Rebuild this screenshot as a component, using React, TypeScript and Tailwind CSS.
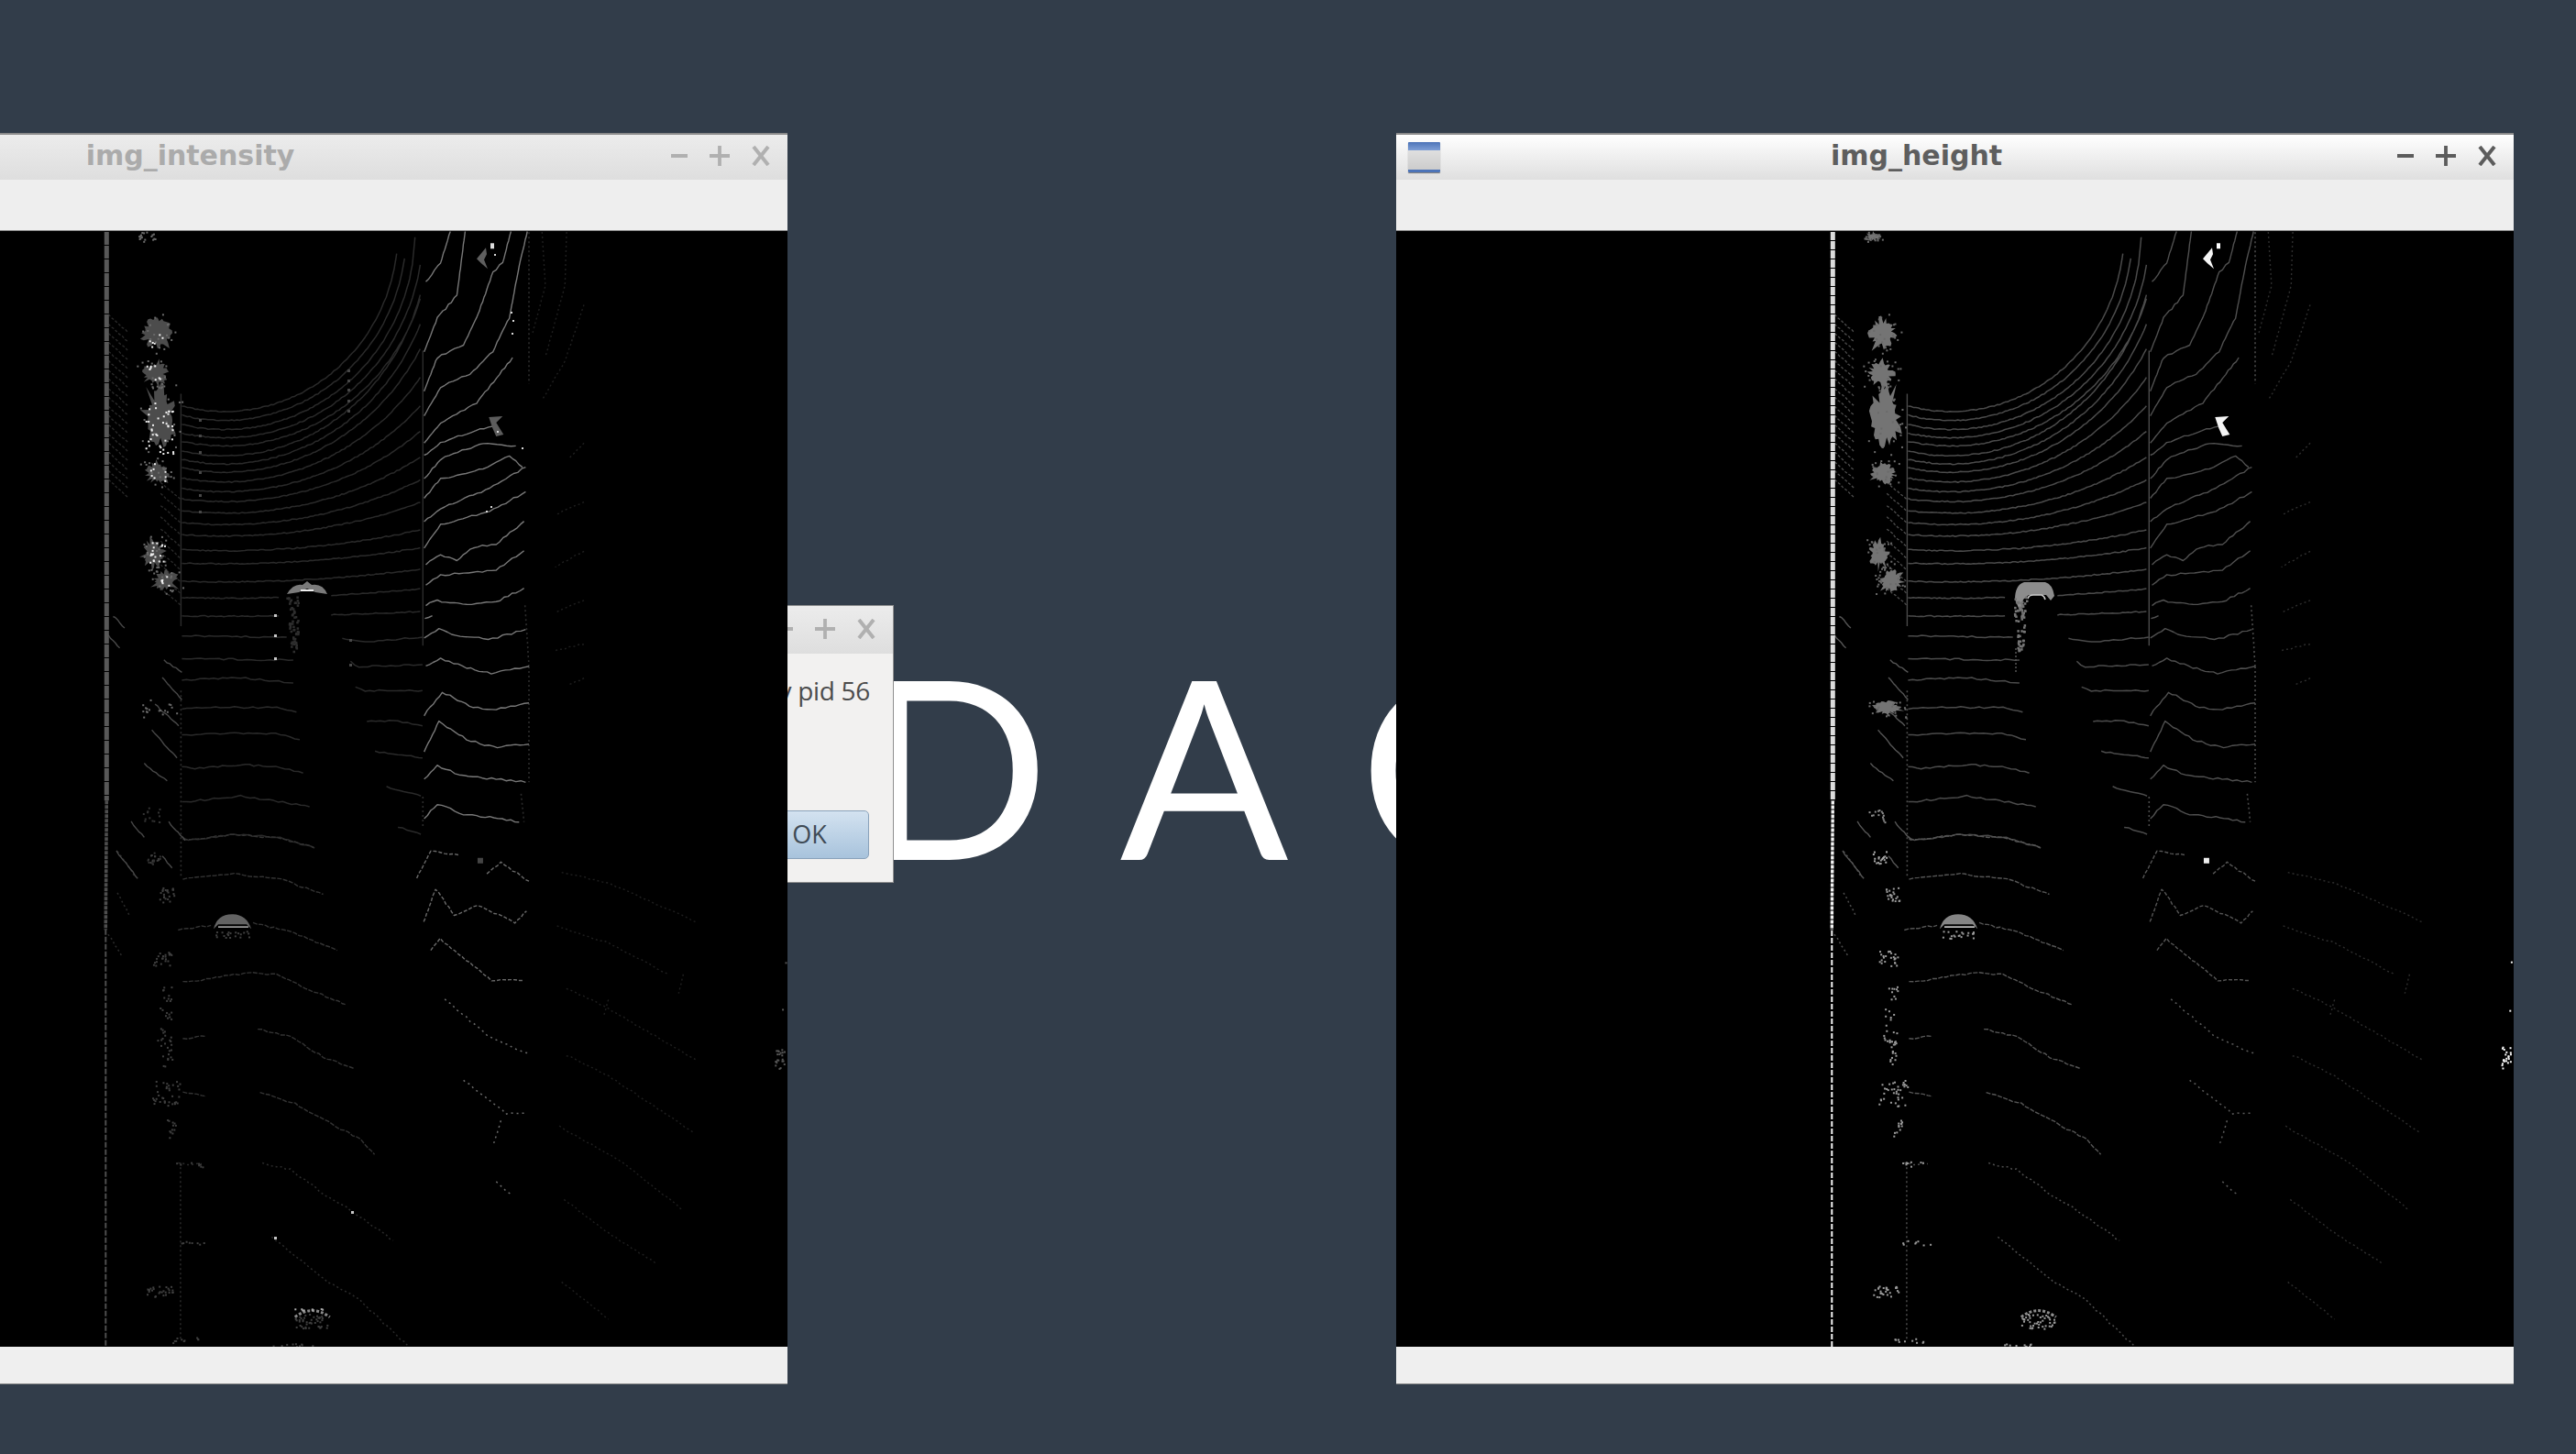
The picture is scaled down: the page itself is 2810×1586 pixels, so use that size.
import React from "react";

type P = [number, number];

function rng(seed: number) {
  let s = seed;
  return () => {
    s |= 0;
    s = (s + 0x6d2b79f5) | 0;
    let t = Math.imul(s ^ (s >>> 15), 1 | s);
    t = (t + Math.imul(t ^ (t >>> 7), 61 | t)) ^ t;
    return ((t ^ (t >>> 14)) >>> 0) / 4294967296;
  };
}

const z5 = (p: P): P => [437 + p[0] / 2.8, -12 + p[1] / 2.8];
const z6 = (p: P): P => [437 + p[0] / 1.96, 648 + p[1] / 2.45];
const zm = (p: P): P => [437 + p[0] / 2.8, 388 + p[1] / 3];

function toD(pts: P[]) {
  return pts.map((p, i) => `${i ? "L" : "M"}${p[0].toFixed(1)} ${p[1].toFixed(1)}`).join("");
}

function jag(pts: P[], amp: number, r: () => number, step = 5): string {
  const out: P[] = [];
  for (let i = 0; i < pts.length - 1; i++) {
    const [a, b] = [pts[i], pts[i + 1]];
    const n = Math.max(1, Math.round(Math.hypot(b[0] - a[0], b[1] - a[1]) / step));
    for (let k = 0; k < n; k++) {
      const t = k / n;
      out.push([a[0] + (b[0] - a[0]) * t, a[1] + (b[1] - a[1]) * t + (r() - 0.5) * amp]);
    }
  }
  out.push(pts[pts.length - 1]);
  return toD(out);
}

const ringTable: [number, number][] = [
  [585, 35], [612, 35], [640, 35], [665, 35], [690, 35], [720, 200], [745, 300], [770, 380], [800, 470],
  [830, 560], [860, 640], [895, 720], [930, 790], [965, 860], [1010, 945], [1050, 1000], [1105, 1065],
  [1155, 1125], [1210, 1195],
];

function ringPaths(): P[][] {
  const out: P[][] = [];
  const cx = 470;
  const cy = 35;
  for (const [y0, yEnd] of ringTable) {
    const ry = y0 - cy;
    let rx: number;
    if (yEnd === 35) rx = 530 + (y0 - 585) * 0.95;
    else {
      const f = Math.min(0.9995, 1 - (y0 - yEnd) / ry);
      rx = 605 / Math.sqrt(1 - f * f);
    }
    const gap = y0 >= 1155 ? [640, 790] : null;
    let cur: P[] = [];
    for (let px = 340; px <= 1075; px += 8) {
      const dx = px - cx;
      const q = 1 - (dx / rx) ** 2;
      if (q <= 0) break;
      const py = cy + ry * Math.sqrt(q);
      if (py < 35) break;
      if (gap && px > gap[0] && px < gap[1]) {
        if (cur.length) out.push(cur);
        cur = [];
        continue;
      }
      cur.push(z5([px, py]));
    }
    if (cur.length) out.push(cur);
  }
  return out;
}

const midLeft: P[][] = [
  [[340, 160], [660, 165]],
  [[830, 170], [900, 180], [1075, 165]],
  [[340, 235], [680, 240]],
  [[855, 245], [880, 262], [1075, 255]],
  [[340, 305], [520, 298], [680, 315]],
  [[870, 330], [900, 340], [1075, 340]],
  [[340, 400], [400, 395], [630, 395], [690, 410]],
  [[905, 440], [1000, 440], [1075, 455]],
  [[340, 487], [500, 478], [640, 482], [700, 500]],
  [[930, 540], [1040, 555], [1075, 560]],
  [[340, 590], [380, 595], [520, 582], [640, 590], [710, 610]],
  [[965, 655], [1070, 685]],
  [[340, 705], [520, 685], [620, 700], [730, 720]],
  [[1000, 785], [1070, 810]],
  [[340, 820], [360, 830], [500, 810], [640, 820], [745, 855]],
];

const midRight: P[][] = [
  [[1080, 170], [1125, 135], [1190, 165], [1290, 170], [1390, 140]],
  [[1085, 260], [1130, 235], [1210, 265], [1285, 285], [1400, 260]],
  [[1080, 420], [1135, 345], [1230, 395], [1300, 400], [1400, 380]],
  [[1080, 540], [1125, 440], [1210, 500], [1290, 525], [1400, 515]],
  [[1080, 630], [1120, 585], [1200, 620], [1300, 630], [1390, 640]],
  [[1080, 760], [1120, 710], [1200, 745], [1280, 755], [1370, 770]],
];

const curbMid: P[][] = [
  [[285, 240], [340, 280]],
  [[280, 295], [340, 370]],
  [[258, 385], [330, 455]],
  [[248, 470], [325, 560]],
  [[225, 580], [295, 635]],
  [[185, 770], [225, 820]],
  [[300, 770], [350, 830]],
  [[140, 865], [205, 955]],
  [[280, 880], [310, 920]],
  [[130, 95], [165, 135]],
  [[115, 160], [150, 200]],
];

const rightZ5: P[][] = [
  [[1085, 190], [1130, 130], [1160, 35]],
  [[1080, 400], [1120, 300], [1180, 230], [1205, 35]],
  [[1080, 520], [1120, 420], [1200, 380], [1240, 300], [1290, 160], [1320, 130], [1345, 35]],
  [[1080, 600], [1130, 510], [1220, 470], [1290, 400], [1340, 300], [1370, 140], [1395, 35]],
  [[1080, 680], [1130, 620], [1240, 560], [1310, 470], [1350, 420]],
  [[1080, 720], [1130, 680], [1250, 640], [1290, 630]],
  [[1080, 790], [1130, 730], [1260, 680], [1360, 690]],
  [[1080, 850], [1130, 790], [1260, 760], [1340, 720], [1380, 755]],
  [[1080, 920], [1130, 880], [1280, 820], [1390, 755]],
  [[1080, 1000], [1130, 930], [1280, 890], [1390, 830]],
  [[1085, 1050], [1130, 1025], [1180, 1040], [1230, 1000], [1300, 990], [1385, 920]],
  [[1085, 1115], [1130, 1085], [1300, 1070], [1385, 1010]],
];

const lowerLeftZ6: P[][] = [
  [[240, 40], [350, 25], [450, 35], [520, 60]],
  [[240, 145], [350, 130], [450, 145], [540, 185]],
  [[230, 280], [300, 268]],
  [[390, 260], [480, 290], [570, 335]],
  [[240, 420], [380, 395], [440, 400], [520, 445], [590, 480]],
  [[240, 570], [290, 565]],
  [[400, 545], [470, 565], [540, 620], [605, 650]],
  [[240, 715], [290, 725]],
  [[405, 712], [480, 745], [560, 800], [620, 840], [650, 880]],
];

const lowerRightZ6: P[][] = [
  [[740, 140], [770, 70], [830, 80]],
  [[755, 260], [780, 170], [820, 240], [870, 215], [950, 260], [975, 230]],
  [[770, 335], [790, 305], [900, 415], [970, 415]],
  [[890, 130], [920, 100], [980, 150]],
];

const rightDottedZ6: P[][] = [
  [[800, 465], [900, 570], [980, 610]],
  [[840, 680], [930, 770], [970, 770]],
  [[920, 790], [905, 850]],
  [[910, 955], [940, 985]],
];

const lowerDotted: P[][] = [
  [[230, 905], [280, 905]],
  [[410, 905], [470, 920], [540, 985], [600, 1030], [690, 1110]],
  [[430, 1100], [490, 1160], [550, 1220], [610, 1260], [720, 1390]],
  [[100, 70], [140, 140]],
  [[100, 180], [125, 240]],
  [[80, 290], [110, 350]],
  [[235, 900], [235, 1380]],
];

const farZ6: P[][] = [
  [[1050, 125], [1150, 155], [1340, 260]],
  [[1040, 270], [1150, 315], [1280, 400]],
  [[1060, 435], [1150, 490], [1340, 630]],
  [[1060, 615], [1150, 670], [1330, 820]],
  [[1045, 805], [1180, 900], [1310, 1030]],
  [[1055, 1000], [1150, 1090], [1250, 1170]],
  [[1050, 1220], [1150, 1320]],
  [[1310, 400], [1300, 450]],
  [[1150, 465], [1140, 510]],
];

const farZ5: P[][] = [
  [[1515, 35], [1510, 200], [1450, 420]],
  [[1568, 260], [1510, 430], [1440, 550]],
  [[1568, 680], [1520, 730]],
  [[1568, 860], [1480, 900]],
  [[1568, 1010], [1480, 1060]],
  [[1568, 1160], [1480, 1200]],
  [[1568, 1295], [1480, 1315]],
  [[1568, 1400], [1520, 1420]],
  [[1440, 35], [1450, 200], [1410, 350]],
];

type Blob = { c: P; rx: number; ry: number };
const blobsZ5: Blob[] = [
  { c: [262, 345], rx: 42, ry: 45 },
  { c: [258, 470], rx: 38, ry: 35 },
  { c: [272, 600], rx: 45, ry: 90 },
  { c: [266, 775], rx: 36, ry: 30 },
  { c: [252, 1020], rx: 30, ry: 40 },
  { c: [290, 1100], rx: 35, ry: 30 },
  { c: [235, 50], rx: 20, ry: 11 },
  { c: [275, 1490], rx: 38, ry: 20 },
];

function blobPath(b: Blob, r: () => number) {
  const pts: P[] = [];
  const n = 38;
  for (let i = 0; i < n; i++) {
    const a = (i / n) * Math.PI * 2;
    const k = 0.62 + r() * 0.55 + (r() < 0.1 ? 0.35 : 0);
    pts.push(z5([b.c[0] + Math.cos(a) * b.rx * k, b.c[1] + Math.sin(a) * b.ry * k]));
  }
  return toD(pts) + "Z";
}

function Lidar({ mode }: { mode: "height" | "intensity" }) {
  const h = mode === "height";
  const r = rng(17);
  const c = h
    ? { ring: "#4b4b4b", right: "#505050", lowerL: "#555", lowerR: "#555", rd: "#5a5a5a", dot: "#4d4d4d", far: "#2e2e2e", blob: "#747474", noise: "#6a6a6a", vert: "#4a4a4a", wall: "#dcdcdc", wallLow: "#f2f2f2", curb: "#555" }
    : { ring: "#2a2a2a", right: "#787878", lowerL: "#333", lowerR: "#6a6a6a", rd: "#6a6a6a", dot: "#2b2b2b", far: "#1f1f1f", blob: "#4c4c4c", noise: "#3a3a3a", vert: "#2c2c2c", wall: "#585858", wallLow: "#4e4e4e", curb: "#484848" };

  const rings = [
    ...ringPaths().map((p) => jag(p, 1.2, r, 7)),
    ...midLeft.map((p) => jag(p.map(zm), 1.8, r)),
  ].join("");
  const right = [...rightZ5.map((p) => jag(p.map(z5), 2.2, r)), ...midRight.map((p) => jag(p.map(zm), 2.2, r)),
    jag(([[1085, 60], [1120, 45], [1210, 60], [1300, 50], [1385, 5]] as P[]).map(zm), 2.2, r),
    jag(([[1082, 105], [1105, 95]] as P[]).map(zm), 1, r),
  ].join("");
  const lowerL = lowerLeftZ6.map((p) => jag(p.map(z6), 2, r)).join("");
  const lowerR = lowerRightZ6.map((p) => jag(p.map(z6), 2, r)).join("");
  const rd = rightDottedZ6.map((p) => jag(p.map(z6), 2.5, r)).join("");
  const dotted = lowerDotted.map((p) => jag(p.map(z6), 2.5, r)).join("");
  const far = [...farZ6.map((p) => jag(p.map(z6), 1.5, r)), ...farZ5.map((p) => jag(p.map(z5), 1.5, r))].join("");

  const diag: string[] = [];
  for (let py = 290; py < 800; py += 28) {
    diag.push(jag([z5([116, py]), z5([116 + 58, py + 52])], 1.5, r, 4));
  }
  for (let py = 800; py < 1130; py += 36) {
    diag.push(jag([z5([275, py]), z5([335, py + 52])], 1.5, r, 4));
  }
  const curb = curbMid.map((p) => jag(p.map(zm), 1.8, r, 4)).join("");

  const vertical = [
    jag([z5([337, 530]), z5([337, 1240])], 1, r),
    jag([z5([1076, 400]), z5([1076, 1300])], 1, r),
  ].join("");
  const vDotted = [
    jag([zm([337, 340]), zm([337, 950])], 1, r),
    jag([z5([1400, 35]), z5([1400, 500])], 2, r),
    jag([zm([1388, 60]), zm([1400, 260])], 2, r),
    jag([zm([1376, 680]), zm([1385, 770])], 2, r),
    jag([zm([1076, 690]), zm([1076, 790])], 2, r),
    jag([zm([1400, 260]), zm([1400, 640])], 2, r),
  ].join("");

  const dots: { x: number; y: number; f: string; s: number }[] = [];
  const scatter = (cx: number, cy: number, rx: number, ry: number, n: number, f: string, s = 2) => {
    for (let i = 0; i < n; i++) {
      dots.push({ x: cx + (r() - 0.5) * 2 * rx, y: cy + (r() - 0.5) * 2 * ry, f, s });
    }
  };
  for (const b of blobsZ5) {
    const [cx, cy] = z5(b.c);
    scatter(cx, cy, (b.rx / 2.8) * 1.5, (b.ry / 2.8) * 1.4, h ? 22 : 18, h ? c.noise : "#6a6a6a");
  }
  if (!h) {
    for (const [px, py, rx, ry, n] of [
      [275, 385, 10, 10, 6], [268, 495, 10, 10, 8], [280, 680, 15, 28, 40], [275, 825, 10, 10, 8], [275, 1085, 10, 12, 18], [295, 1170, 7, 8, 6],
    ] as number[][]) {
      scatter(440 + px / 3, -12 + py / 3, rx, ry, n, "#f0f0f0");
    }
    for (const [u, v] of [[659, 418], [659, 440], [659, 465], [743, 1069], [659, 1097]]) {
      dots.push({ x: u, y: v, f: "#c8c8c8", s: 3 });
    }
    for (const [u, v] of [[741, 445], [741, 472], [739, 151], [739, 162], [739, 172], [739, 184], [739, 195], [577, 205], [577, 222], [577, 240], [577, 262], [577, 287], [577, 305]]) {
      dots.push({ x: u, y: v, f: "#474747", s: 3 });
    }
    scatter(696, 1176, 16, 1, 8, "#aaa");
    for (const [u, v] of [[899, 25], [919, 97], [917, 88], [918, 111], [902, 218], [929, 236], [890, 305], [895, 300]]) {
      dots.push({ x: u, y: v, f: "#d8d8d8", s: 2 });
    }
  }

  for (let i = 0; i < 60; i++) {
    const t = r();
    const v = 398 + t * 60;
    const w = 8 * (1 - t * 0.7);
    dots.push({ x: 680 + (r() - 0.5) * 2 * w, y: v, f: h ? "#757575" : "#2e2e2e", s: 2.5 });
  }
  for (const [x, y, rx, ry, n] of [
    [195, 355, 10, 8, 24], [205, 185, 8, 8, 22], [205, 715, 16, 14, 36], [190, 1245, 14, 6, 28],
    [200, 540, 8, 22, 24], [215, 810, 5, 10, 12], [515, 1325, 18, 8, 44], [345, 292, 18, 4, 20],
    [180, 90, 6, 5, 10], [240, 1375, 16, 3, 10], [470, 1388, 24, 2, 10], [255, 905, 15, 3, 8], [255, 1115, 15, 3, 8],
    [205, 450, 5, 8, 10], [205, 620, 6, 10, 10],
  ] as number[][]) {
    const [cx, cy] = z6([x, y]);
    scatter(cx, cy, rx, ry, n, h ? "#9a9a9a" : "#3f3f3f");
  }
  for (const [x, y, rx, ry, n] of [[1515, 620, 5, 12, 22], [1527, 365, 1, 1, 1], [1523, 492, 1, 1, 1]] as number[][]) {
    const [cx, cy] = z6([x, y]);
    scatter(cx, cy, rx, ry, n, h ? "#f5f5f5" : "#555");
  }
  const [mx, my] = zm([245, 745]);
  scatter(mx, my, 9, 8, 14, h ? "#8a8a8a" : "#333");
  const [ox, oy] = zm([250, 885]);
  scatter(ox, oy, 8, 7, 10, h ? "#aaa" : "#333");

  const [tx, ty] = z6([515, 1300]);
  const blobs = blobsZ5.slice(0, h ? 8 : 6).map((b) => blobPath(b, r)).join("");
  const wallTop = jag([z5([110, 35]), zm([110, 700])], 1.2, r, 10);
  const wallLow = jag([zm([110, 700]), z6([75, 280])], 2, r, 6);
  const wallEnd = jag([z6([75, 280]), z6([75, 1395])], 2.6, r, 7);

  const [ax, ay] = z6([345, 265]);
  const [bx, by] = z5([1260, 110]);
  const [wx, wy] = z5([1300, 630]);
  const [sx, sy] = z6([876, 95]);

  return (
    <svg width={1219} height={1217} viewBox="0 0 1219 1217" className="block bg-black">
      <g fill="none" strokeLinejoin="round">
        <path d={far} stroke={c.far} strokeWidth={1.4} strokeDasharray="2 3" />
        <path d={rings} stroke={c.ring} strokeWidth={1.5} />
        <path d={vertical} stroke={c.vert} strokeWidth={1.4} />
        <path d={vDotted} stroke={c.vert} strokeWidth={1.6} strokeDasharray="2 3" />
        <path d={right} stroke={c.right} strokeWidth={1.4} />
        <path d={lowerL} stroke={c.lowerL} strokeWidth={1.4} strokeDasharray="5 1.5" />
        <path d={lowerR} stroke={c.lowerR} strokeWidth={1.4} strokeDasharray="4 2" />
        <path d={rd} stroke={c.rd} strokeWidth={1.5} strokeDasharray="2 4" />
        <path d={dotted} stroke={c.dot} strokeWidth={1.5} strokeDasharray="2 3" />
        <path d={diag.join("")} stroke={c.dot} strokeWidth={1.3} strokeDasharray="3 2" />
        <path d={curb} stroke={c.curb} strokeWidth={1.4} />
        <path d={wallTop} stroke={c.wall} strokeWidth={5} strokeDasharray={h ? "9 1" : "14 1"} />
        <path d={wallLow} stroke={c.wallLow} strokeWidth={h ? 3.4 : 3.6} strokeDasharray="4 1" />
        <path d={wallEnd} stroke={c.wallLow} strokeWidth={2} strokeDasharray="6 2" />
      </g>
      <path d={blobs} fill={c.blob} />
      {h ? (
        <>
          <path d="M675 402Q675 386 685 383H708Q716 385 718 398L714 403L709 397H690L684 402L681 416Z" fill="#8c8c8c" />
          <path d="M689 401Q690 397 695 397H704Q707 398 708 402" fill="none" stroke="#c8c8c8" strokeWidth={1.6} />
          <path d="M676 455V482" stroke="#555" strokeWidth={1.5} strokeDasharray="2 2" />
        </>
      ) : (
        <>
          <path d="M673 396Q680 384 690 386L695 382L700 386Q712 384 717 396L704 394L695 390L686 394Z" fill="#7a7a7a" />
          <path d="M688 392H702" stroke="#eee" strokeWidth={2} />
        </>
      )}
      <path
        d={`M${ax - 20} ${ay + 5}Q${ax - 16} ${ay - 11} ${ax} ${ay - 11}Q${ax + 16} ${ay - 11} ${ax + 21} ${ay + 5}L${ax + 16} ${ay}H${ax - 15}Z`}
        fill={h ? "#858585" : "#636363"}
      />
      <path d={`M${ax - 15} ${ay + 3}H${ax + 18}`} stroke={h ? "#bbb" : "#999"} strokeWidth={1.6} />
      <path d={`M${tx - 18} ${ty + 6}Q${tx} ${ty - 8} ${tx + 20} ${ty + 6}`} fill="none" stroke={h ? "#8a8a8a" : "#888"} strokeWidth={3} strokeDasharray="3 2" />
      <path
        d={`M${bx - 7} ${by + 3}L${bx + 3} ${by - 9}L${bx + 4} ${by - 2}L${bx + 1} ${by + 4}L${bx + 5} ${by + 14}L${bx - 2} ${by + 8}Z`}
        fill={h ? "#f5f5f5" : "#5f5f5f"}
      />
      <rect x={bx + 8} y={by - 14} width={4} height={6} fill={h ? "#fff" : "#ddd"} />
      <path
        d={`M${wx - 8} ${wy - 10}L${wx + 7} ${wy - 11}L${wx} ${wy - 4}L${wx + 8} ${wy + 9}L${wx} ${wy + 11}L${wx - 4} ${wy + 2}Z`}
        fill={h ? "#f5f5f5" : "#5c5c5c"}
      />
      <rect x={sx - 3} y={sy - 3} width={6} height={6} fill={h ? "#eee" : "#444"} />
      {dots.map((d, i) => (
        <rect key={i} x={d.x} y={d.y} width={d.s} height={d.s} fill={d.f} />
      ))}
    </svg>
  );
}

function Controls({ color }: { color: string }) {
  return (
    <div className="flex pr-[6px]" style={{ color }}>
      <div className="flex h-[24px] w-[44px] items-center justify-center">
        <svg width="18" height="20" viewBox="0 0 18 20"><path d="M0 10H18" stroke="currentColor" strokeWidth="4" /></svg>
      </div>
      <div className="flex h-[24px] w-[44px] items-center justify-center">
        <svg width="22" height="22" viewBox="0 0 22 22"><path d="M0 11H22M11 0V22" stroke="currentColor" strokeWidth="3.8" /></svg>
      </div>
      <div className="flex h-[24px] w-[46px] items-center justify-center">
        <svg width="20" height="22" viewBox="0 0 20 22"><path d="M2 1L18 21M18 1L2 21" stroke="currentColor" strokeWidth="4" /></svg>
      </div>
    </div>
  );
}

function AppIcon() {
  return (
    <div className="ml-[13px] mt-[3px] flex h-[33px] w-[35px] flex-col overflow-hidden rounded-[1px] bg-gradient-to-b from-[#e8e8e8] to-[#c9c9c9] shadow-[0_1px_1px_#777]">
      <div className="h-[9px] bg-gradient-to-b from-[#4d74b8] to-[#7f9fd6]" />
      <div className="flex-1" />
      <div className="h-[3px] bg-[#4d74b8]" />
    </div>
  );
}

function LidarWindow({ title, active, mode, className }: { title: string; active: boolean; mode: "height" | "intensity"; className: string }) {
  return (
    <div className={`absolute top-[145px] flex h-[1365px] w-[1219px] flex-col border-b border-[#8c8c8c] ${className}`}>
      <div
        className={`flex h-[51px] shrink-0 items-center border-t-2 border-[#8a8a8a] pb-[3px] bg-gradient-to-b ${
          active ? "from-white to-[#dfdfdf]" : "from-[#ececec] to-[#dedede]"
        }`}
      >
        <div className="w-[56px] shrink-0">{active && <AppIcon />}</div>
        <div
          className={`flex-1 text-center font-['DejaVu_Sans'] text-[30px] font-bold leading-none ${
            active ? "text-[#5e5e5e]" : "text-[#ababab]"
          }`}
        >
          {title}
        </div>
        <Controls color={active ? "#5c5c5c" : "#b0b0b0"} />
      </div>
      <div className="h-[55px] shrink-0 bg-[#eeeeee]" />
      <div className="h-px shrink-0 bg-[#8a8a8a]" />
      <div className="h-[1217px] shrink-0 bg-black">
        <Lidar mode={mode} />
      </div>
      <div className="flex-1 bg-[#efefef]" />
    </div>
  );
}

export default function App() {
  return (
    <div className="relative h-[1586px] w-[2810px] overflow-hidden bg-[#323d4a]">
      <div className="absolute left-[938px] top-[657px] whitespace-nowrap font-['Lato','Open_Sans',sans-serif] text-[272px] font-normal leading-[1.3] tracking-[82px] text-white">
        DAC
      </div>

      <div className="absolute left-[600px] top-[660px] flex h-[303px] w-[375px] flex-col border border-[#8f8f8f] bg-[#f2f1f0]">
        <div className="flex h-[52px] shrink-0 items-center justify-end pb-[3px] bg-gradient-to-b from-[#ececec] to-[#dedede]">
          <Controls color="#b0b0b0" />
        </div>
        <div className="flex flex-1 flex-col items-end pr-[25px]">
          <div className="mt-[20px] font-['Open_Sans',sans-serif] text-[28px] leading-[40px] tracking-[-0.3px] text-[#4c4c4c]">
            by pid 56
          </div>
          <div className="mr-[1px] mt-[111px] flex h-[53px] w-[130px] items-center justify-center rounded-[5px] border border-[#8aa2ba] bg-gradient-to-b from-[#d3e2f0] to-[#a8c3dc] font-['Open_Sans',sans-serif] text-[27px] text-[#3f4a55]">
            OK
          </div>
        </div>
      </div>

      <LidarWindow title="img_intensity" active={false} mode="intensity" className="left-[-360px]" />
      <LidarWindow title="img_height" active mode="height" className="left-[1523px]" />
    </div>
  );
}
